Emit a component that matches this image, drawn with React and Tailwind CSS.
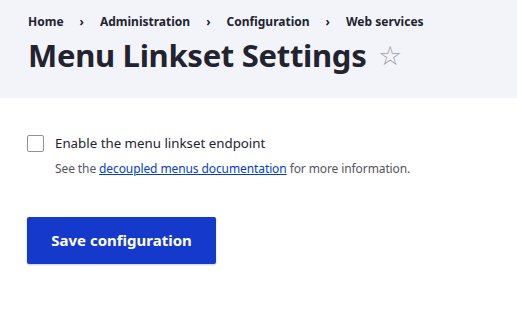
export default function App() {
  return (
    <div className="min-h-[323px] w-[517px] bg-white text-[#222330]" style={{ fontFamily: '"Noto Sans", "Open Sans", sans-serif' }}>
      <div className="h-[98px] bg-[#f3f4f9] px-[28px] pt-[12px]">
        <nav className="flex items-center text-[12px] font-bold leading-[20px] text-[#222330]">
          <span>Home</span>
          <span className="px-[16px] text-[12px]">›</span>
          <span>Administration</span>
          <span className="px-[16px] text-[12px]">›</span>
          <span>Configuration</span>
          <span className="px-[16px] text-[12px]">›</span>
          <span>Web services</span>
        </nav>
        <div className="mt-[3px] flex items-center">
          <h1 className="text-[31px] font-bold leading-[40px] tracking-[-0.3px]">Menu Linkset Settings</h1>
          <span className="ml-[12px] text-[27px] leading-[40px] text-[#a0a0a8]">☆</span>
        </div>
      </div>
      <div className="px-[27px] pt-[35px]">
        <label className="flex items-center">
          <span className="h-[17px] w-[17px] rounded-[2px] border border-[#8e929c] bg-white"></span>
          <span className="ml-[11px] text-[13.3px] leading-[20px]">Enable the menu linkset endpoint</span>
        </label>
        <p className="ml-[28px] mt-[7px] text-[12px] leading-[18px] tracking-[-0.1px] text-[#545560]">
          See the <a className="text-[#003ecc] underline">decoupled menus documentation</a> for more information.
        </p>
        <button className="mt-[39px] h-[47px] w-[189px] rounded-[2px] bg-[#153acb] text-[15px] font-bold text-white shadow-[0_1px_2px_rgba(0,0,0,0.2)]">
          Save configuration
        </button>
      </div>
    </div>
  );
}
